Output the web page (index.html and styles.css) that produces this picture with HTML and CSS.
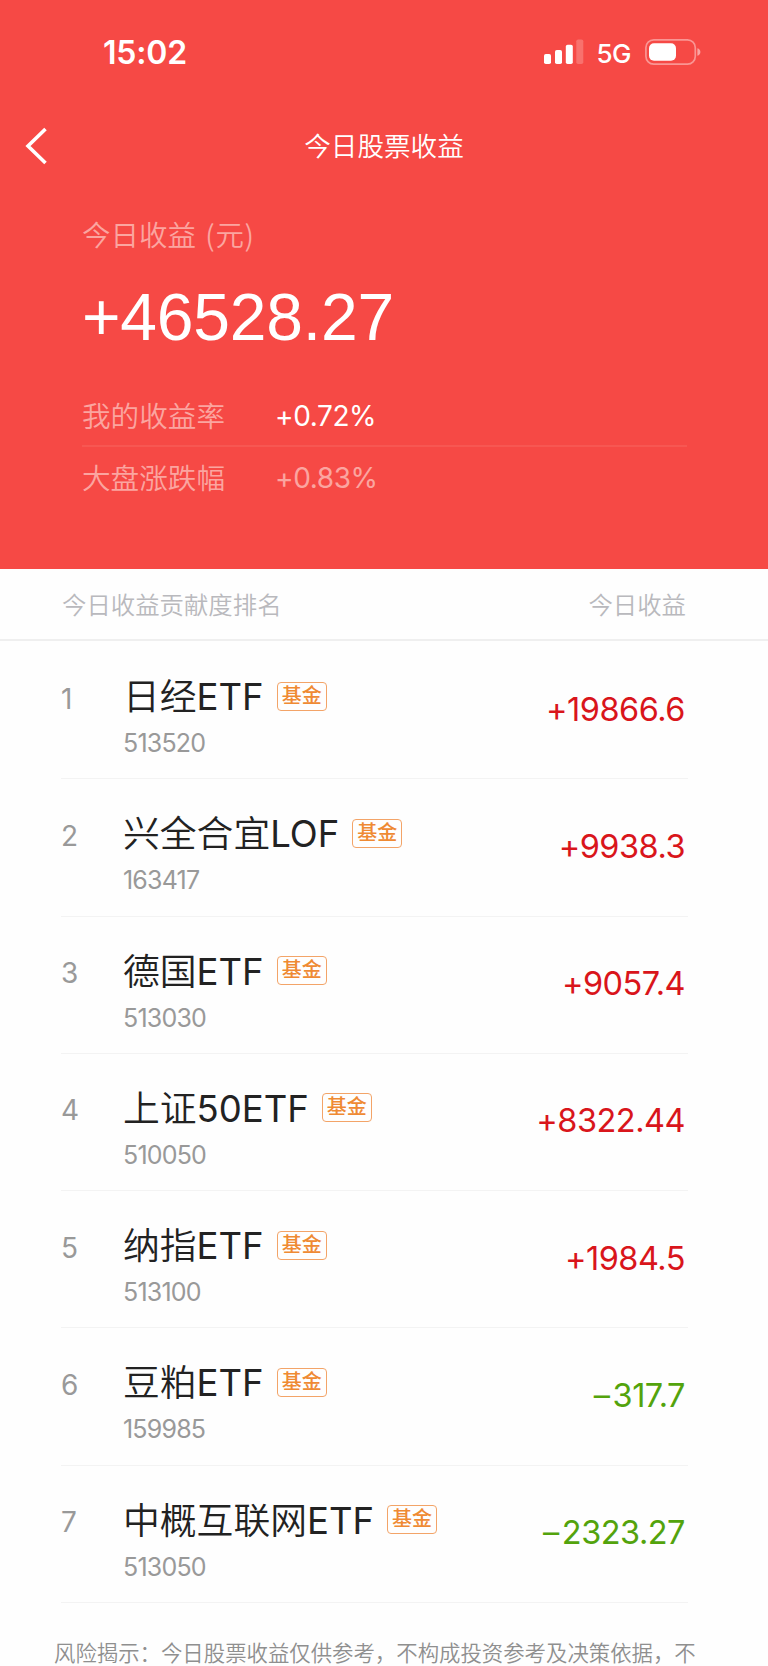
FILE: index.html
```html
<!DOCTYPE html>
<html lang="zh-CN">
  <head>
    <meta charset="utf-8">
    <title>今日股票收益</title>
    <link rel="stylesheet" href="styles.css">
  </head>
  <body>
    <header class="hero">
      <div class="status-bar">
        <span class="time">15:02</span>
        <div class="status-icons">
          <svg class="signal" width="40" height="26" viewBox="0 0 40 26" fill="#fff">
            <rect x="0" y="15" width="7" height="10" rx="1.8" />
            <rect x="11" y="11" width="7" height="14" rx="1.8" />
            <rect x="21.8" y="5.7" width="7" height="19.3" rx="1.8" />
            <rect x="32.3" y="0.5" width="7" height="24.5" rx="1.8" opacity="0.22" />
          </svg>
          <span class="network">5G</span>
          <svg class="battery" width="56" height="26" viewBox="0 0 56 26">
            <rect x="0.9" y="0.9" width="49.4" height="24.2" rx="7.8" fill="none" stroke="#fff" stroke-opacity="0.42" stroke-width="1.7" />
            <rect x="4" y="4.2" width="27" height="17.6" rx="5" fill="#fff" />
            <path d="M52.4 9.2c4 1.2 4 6.400 0 7.600z" fill="#fff" fill-opacity="0.5" />
          </svg>
        </div>
      </div>

      <div class="nav-bar">
        <svg class="back" width="24" height="38" viewBox="0 0 24 38">
          <path d="M21.500 2L4 19l17.500 17" fill="none" stroke="#fff" stroke-width="3.600" />
        </svg>
        <h1>今日股票收益</h1>
      </div>

      <div class="summary">
        <p class="label">今日收益 <span class="unit">(元)</span></p>
        <p class="total">+46528.27</p>
        <div class="rate">
          <span class="rate-name">我的收益率</span>
          <span class="rate-value mine">+0.72%</span>
        </div>
        <div class="rate">
          <span class="rate-name">大盘涨跌幅</span>
          <span class="rate-value">+0.83%</span>
        </div>
      </div>
    </header>

    <div class="list-head">
      <span>今日收益贡献度排名</span>
      <span>今日收益</span>
    </div>

    <ul class="list">
      <li class="row">
        <span class="rank">1</span>
        <div class="stock">
          <div class="title"><span class="name">日经<b>ETF</b></span><span class="tag">基金</span></div>
          <div class="code">513520</div>
        </div>
        <span class="amount up">+19866.6</span>
      </li>
      <li class="row">
        <span class="rank">2</span>
        <div class="stock">
          <div class="title"><span class="name">兴全合宜<b>LOF</b></span><span class="tag">基金</span></div>
          <div class="code">163417</div>
        </div>
        <span class="amount up">+9938.3</span>
      </li>
      <li class="row">
        <span class="rank">3</span>
        <div class="stock">
          <div class="title"><span class="name">德国<b>ETF</b></span><span class="tag">基金</span></div>
          <div class="code">513030</div>
        </div>
        <span class="amount up">+9057.4</span>
      </li>
      <li class="row">
        <span class="rank">4</span>
        <div class="stock">
          <div class="title"><span class="name">上证<b>50ETF</b></span><span class="tag">基金</span></div>
          <div class="code">510050</div>
        </div>
        <span class="amount up">+8322.44</span>
      </li>
      <li class="row">
        <span class="rank">5</span>
        <div class="stock">
          <div class="title"><span class="name">纳指<b>ETF</b></span><span class="tag">基金</span></div>
          <div class="code">513100</div>
        </div>
        <span class="amount up">+1984.5</span>
      </li>
      <li class="row">
        <span class="rank">6</span>
        <div class="stock">
          <div class="title"><span class="name">豆粕<b>ETF</b></span><span class="tag">基金</span></div>
          <div class="code">159985</div>
        </div>
        <span class="amount down"><i>–</i>317.7</span>
      </li>
      <li class="row">
        <span class="rank">7</span>
        <div class="stock">
          <div class="title"><span class="name">中概互联网<b>ETF</b></span><span class="tag">基金</span></div>
          <div class="code">513050</div>
        </div>
        <span class="amount down"><i>–</i>2323.27</span>
      </li>
    </ul>

    <p class="notice">风险揭示：今日股票收益仅供参考，不构成投资参考及决策依据，不</p>
  </body>
</html>
```

FILE: styles.css
```css
* {
  box-sizing: border-box;
}

body {
  margin: 0;
  height: 1666px;
  overflow: hidden;
  background-color: #fefefe;
  font-family: Inter, "Noto Sans CJK SC", sans-serif;
  font-weight: 350;
}

h1,
p,
ul {
  margin: 0;
  padding: 0;
}

.hero {
  height: 569px;
  background-color: #f64945;
  color: #fff;
}

.status-bar {
  display: flex;
  justify-content: space-between;
  align-items: center;
  height: 104px;
  padding: 0 67px 0 103px;
}

.time {
  font-size: 32px;
  font-weight: 600;
  letter-spacing: -0.2px;
}

.status-icons {
  display: flex;
  align-items: center;
}

.network {
  margin: 2px 14px 0 12px;
  font-size: 26px;
  font-weight: 450;
  letter-spacing: -0.5px;
}

.nav-bar {
  display: flex;
  align-items: center;
  height: 83px;
  padding: 0 24px;
}

.nav-bar h1 {
  flex: 1;
  padding: 0 24px 3px 0;
  text-align: center;
  font-size: 26.6px;
  font-weight: 350;
}

.summary {
  padding: 27px 81px 0 82px;
}

.label {
  font-family: "Noto Sans CJK SC", sans-serif;
  font-size: 28.5px;
  line-height: 40px;
  color: #fba5a0;
}

.unit {
  margin-left: 3px;
  letter-spacing: 0.6px;
}

.total {
  margin-top: 25px;
  font-family: "Liberation Sans", sans-serif;
  font-size: 66px;
  font-weight: 400;
  line-height: 76px;
  letter-spacing: -0.2px;
}

.rate {
  display: flex;
  align-items: center;
  height: 62px;
  font-size: 28.6px;
  line-height: 40px;
  color: #fba5a0;
}

.total + .rate {
  margin-top: 30px;
  border-bottom: 2px solid #f75752;
}

.rate-name {
  width: 193px;
  padding-top: 3px;
}

.rate-value {
  padding-top: 2px;
  font-size: 28px;
  font-weight: 375;
  letter-spacing: -0.4px;
}

.rate + .rate {
  height: 60px;
}

.mine {
  color: #fff;
}

.list-head {
  display: flex;
  justify-content: space-between;
  align-items: center;
  height: 72px;
  padding: 0 82px 2px 62px;
  border-bottom: 2px solid #efefef;
  font-size: 24.4px;
  color: #b9b9bd;
}

.list {
  margin: 1px 80px 0 61px;
  list-style: none;
}

.row {
  display: flex;
  height: 137.25px;
  border-bottom: 1px solid #f3f3f3;
}

.rank {
  width: 62px;
  padding-top: 39.5px;
  font-size: 28px;
  font-weight: 375;
  line-height: 34px;
  color: #999;
}

.stock {
  flex: 1;
  padding-top: 34px;
}

.title {
  display: flex;
  align-items: center;
  height: 42px;
}

.name {
  font-size: 36.8px;
  line-height: 42px;
  color: #222;
}

.name b {
  font-size: 36.5px;
  font-weight: 375;
  letter-spacing: 0;
}

.tag {
  width: 50px;
  height: 29px;
  margin: 0 0 2px 13px;
  border: 1px solid #f3a468;
  border-radius: 4px;
  font-size: 20px;
  font-weight: 500;
  line-height: 26px;
  text-align: center;
  color: #ef8a33;
}

.code {
  margin-top: 10px;
  font-size: 25px;
  font-weight: 375;
  line-height: 30px;
  letter-spacing: -0.8px;
  color: #999;
}

.amount {
  padding: 47.5px 3px 0 0;
  font-size: 32.5px;
  font-weight: 375;
  line-height: 40px;
  letter-spacing: -0.5px;
}

.amount i {
  margin-right: 3px;
  font-style: normal;
}

.up {
  color: #d9151b;
}

.down {
  color: #53a30c;
}

.notice {
  margin: 34px 0 0 54px;
  font-size: 21.4px;
  line-height: 32px;
  white-space: nowrap;
  color: #8f8f8f;
}
```
